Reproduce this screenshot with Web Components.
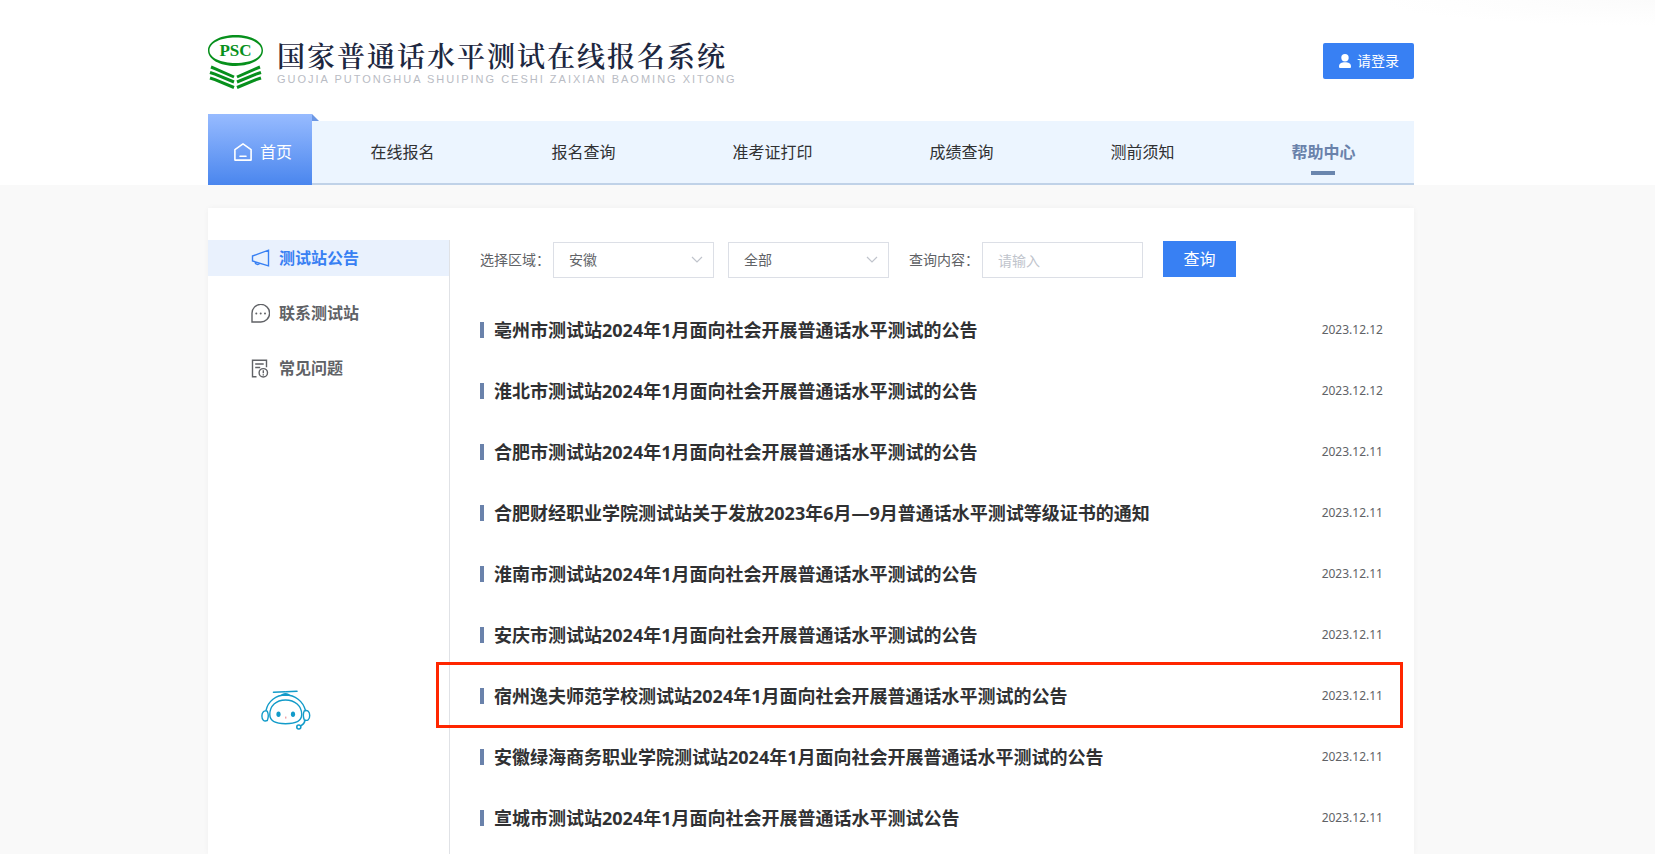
<!DOCTYPE html>
<html lang="zh-CN">
<head>
<meta charset="utf-8">
<meta name="viewport" content="width=device-width, initial-scale=1">
<title>国家普通话水平测试在线报名系统</title>
<style>
  html { height: 100%; }
  body {
    margin: 0; min-height: 100%; display: flex; flex-direction: column;
    background: #f9f9f9; color: #303133;
    font: 14px/20px "Noto Sans", "Noto Sans CJK SC", sans-serif;
    --gutter: 33px; --page: 1206px; --blue: #3880f3; --slate: #6a82ab;
  }
</style>
</head>
<body>
<site-header>
  <site-brand slot="brand"></site-brand>
  <login-button slot="action">请登录</login-button>
  <site-nav slot="nav">
    <nav-home slot="home">首页</nav-home>
    <nav-item>在线报名</nav-item>
    <nav-item>报名查询</nav-item>
    <nav-item>准考证打印</nav-item>
    <nav-item>成绩查询</nav-item>
    <nav-item>测前须知</nav-item>
    <nav-item current>帮助中心</nav-item>
  </site-nav>
</site-header>
<help-panel>
  <side-menu slot="side">
    <side-item icon="horn" current>测试站公告</side-item>
    <side-item icon="chat">联系测试站</side-item>
    <side-item icon="doc">常见问题</side-item>
    <help-robot slot="robot"></help-robot>
  </side-menu>
  <filter-bar></filter-bar>
  <notice-list>
    <notice-row date="2023.12.12">亳州市测试站2024年1月面向社会开展普通话水平测试的公告</notice-row>
    <notice-row date="2023.12.12">淮北市测试站2024年1月面向社会开展普通话水平测试的公告</notice-row>
    <notice-row date="2023.12.11">合肥市测试站2024年1月面向社会开展普通话水平测试的公告</notice-row>
    <notice-row date="2023.12.11">合肥财经职业学院测试站关于发放2023年6月—9月普通话水平测试等级证书的通知</notice-row>
    <notice-row date="2023.12.11">淮南市测试站2024年1月面向社会开展普通话水平测试的公告</notice-row>
    <notice-row date="2023.12.11">安庆市测试站2024年1月面向社会开展普通话水平测试的公告</notice-row>
    <notice-row date="2023.12.11" marked>宿州逸夫师范学校测试站2024年1月面向社会开展普通话水平测试的公告</notice-row>
    <notice-row date="2023.12.11">安徽绿海商务职业学院测试站2024年1月面向社会开展普通话水平测试的公告</notice-row>
    <notice-row date="2023.12.11">宣城市测试站2024年1月面向社会开展普通话水平测试公告</notice-row>
  </notice-list>
</help-panel>

<script>
const define = (name, render) => customElements.define(name, class extends HTMLElement {
  connectedCallback() {
    if (this.shadowRoot) return;
    this.attachShadow({ mode: 'open' }).innerHTML = render(this);
  }
});

define('site-header', () => `
<style>
  :host { display: block; padding-right: var(--gutter);
    background: radial-gradient(ellipse 280px 26px at 100% 0, #fbfbfb, #fff) #fff; }
  header { max-width: var(--page); margin: 0 auto; }
  .top { display: flex; justify-content: space-between; align-items: flex-start; height: 79px; padding-top: 35px; }
  ::slotted([slot=action]) { margin-top: 8px; }
</style>
<header><div class="top"><slot name="brand"></slot><slot name="action"></slot></div><slot name="nav"></slot></header>`);

define('site-brand', () => `
<style>
  :host { display: flex; gap: 14px; }
  svg { flex: none; }
  .psc { font: bold 17px "Liberation Serif", serif; fill: #07901c; }
  h1 { margin: 2px 0 0; font: 600 28px/36px "Noto Serif CJK SC", "Noto Sans CJK SC", serif; letter-spacing: 2px; color: #1d2740; white-space: nowrap; }
  p { margin: 0; font: 11px/12px "Liberation Sans", sans-serif; letter-spacing: 2px; color: #b9bcc4; white-space: nowrap; }
</style>
<svg width="55" height="54" viewBox="0 0 55 54" role="img" aria-label="PSC">
  <path fill="#07901c" fill-rule="evenodd" d="M27.500 0C43 0 55 6.500 55 15.500S43 31 27.500 31 0 24.500 0 15.500 12 0 27.500 0zM27.500 2.600C13 2.600 1.500 8 1.500 15.500S13 28 27.500 28 53.500 23 53.500 15.500 42 2.600 27.500 2.600z"/>
  <text class="psc" x="27.500" y="21" text-anchor="middle">PSC</text>
  <g fill="none" stroke="#07901c" stroke-width="3">
    <path d="M3 32l4.500 1.800L26 42M2 37.500l5 1.700L26 47M2 43l5 1.700L26 52.500"/>
    <path d="M52 32l-4.500 1.800L29 42M53 37.500l-5 1.700L29 47M53 43l-5 1.700L29 52.500"/>
  </g>
</svg>
<div><h1>国家普通话水平测试在线报名系统</h1><p>GUOJIA PUTONGHUA SHUIPING CESHI ZAIXIAN BAOMING XITONG</p></div>`);

define('login-button', () => `
<style>
  :host { display: block; }
  button { display: flex; align-items: center; gap: 6px; height: 36px; padding: 0 15px 0 16px; border: 0; border-radius: 2px;
    background: var(--blue); color: #fff; font: inherit; cursor: pointer; white-space: nowrap; }
</style>
<button type="button"><svg width="12" height="14" viewBox="0 0 12 14" fill="#fff" aria-hidden="true"><circle cx="6" cy="3.700" r="3.700"/><path d="M0 12.500C0 9.600 2.500 8.300 6 8.300s6 1.300 6 4.200c0 1-.5 1.500-1.500 1.500h-9C.5 14 0 13.500 0 12.500z"/></svg><slot></slot></button>`);

define('site-nav', () => `
<style>
  :host { display: block; }
  nav { display: flex; align-items: flex-end; }
  .items { flex: 1; display: flex; justify-content: space-around; height: 62px; background: #ecf5ff; border-bottom: 2px solid #c0d2e8; }
</style>
<nav aria-label="主导航"><slot name="home"></slot><div class="items"><slot></slot></div></nav>`);

define('nav-home', () => `
<style>
  :host { display: block; position: relative; }
  a { display: flex; align-items: center; gap: 8px; width: 104px; height: 71px; box-sizing: border-box; padding: 4px 0 0 26px;
    background: linear-gradient(#97bbff, #4a86ee); color: #fff; font-size: 16px; line-height: 24px; text-decoration: none; }
  :host::after { content: ""; position: absolute; left: 100%; top: 0; width: 7px; height: 7px; background: #6c97e4; clip-path: polygon(0 0, 100% 100%, 0 100%); }
</style>
<a href="#"><svg width="18" height="18" viewBox="0 0 18 18" fill="none" stroke="#fff" stroke-width="1.600" stroke-linejoin="round" stroke-linecap="round" aria-hidden="true"><path d="M.9 6.600L9 .9l8.100 5.700v10.500H.9zM6 13.200h6"/></svg><slot></slot></a>`);

define('nav-item', () => `
<style>
  :host { display: block; }
  a { position: relative; display: block; color: #303133; font-size: 16px; line-height: 62px; text-decoration: none; white-space: nowrap; }
  :host([current]) a { color: var(--slate); font-weight: 700; }
  :host([current]) a::after { content: ""; position: absolute; left: 50%; bottom: 8px; width: 24px; height: 4px; margin-left: -12px; background: #6a86ae; }
</style>
<a href="#"><slot></slot></a>`);

define('help-panel', () => `
<style>
  :host { flex: 1; display: flex; padding: 23px var(--gutter) 0 0; }
  main { flex: 1; display: flex; max-width: var(--page); margin: 0 auto; padding-top: 32px; box-sizing: border-box; background: #fff; box-shadow: 0 0 6px rgba(0,0,0,.04); }
  section { flex: 1; min-width: 0; padding: 1px 31px 0 30px; }
  ::slotted([slot=side]) { flex: none; width: 241px; border-right: 1px solid #e0e2e6; }
</style>
<main><slot name="side"></slot><section><slot></slot></section></main>`);

define('side-menu', () => `
<style>
  :host { display: block; position: relative; }
  nav { display: flex; flex-direction: column; gap: 19px; }
  ::slotted([slot=robot]) { position: absolute; left: 53px; top: 450px; }
</style>
<nav aria-label="帮助中心"><slot></slot></nav><slot name="robot"></slot>`);

const sideIcons = {
  horn: '<path d="M1.500 7L17.500 1.200v15.600L1.500 12zM4 12.800c0 3 4.200 3.500 4.500 1.300"/>',
  chat: '<path d="M1 18V9.500A8.800 8.800 0 1 1 9.500 18z"/><g fill="currentColor" stroke="none"><circle cx="5.300" cy="9.500" r="1"/><circle cx="9.700" cy="9.500" r="1"/><circle cx="14" cy="9.500" r="1"/></g>',
  doc: '<path d="M5.500 17.800H1.500V1.200h14v7M4.200 5h8.500M4.200 8.500h5"/><circle cx="12.300" cy="13.800" r="4.200"/><path d="M12.300 11.300v3M12.300 15.300v1.200"/>'
};
define('side-item', el => `
<style>
  :host { display: block; }
  a { display: flex; align-items: center; gap: 9px; height: 36px; padding-left: 43px; color: #606266; font-size: 16px; font-weight: 700; line-height: 24px; text-decoration: none; }
  :host([current]) a { background: #e9f1fd; color: var(--blue); }
</style>
<a href="#"><svg width="19" height="19" viewBox="0 0 19 19" fill="none" stroke="currentColor" stroke-width="1.400" aria-hidden="true">${sideIcons[el.getAttribute('icon')]}</svg><slot></slot></a>`);

define('help-robot', () => `
<style>:host, svg { display: block; }</style>
<svg width="50" height="40" viewBox="0 0 50 40" fill="none" stroke="#129bc9" stroke-width="1.400" stroke-linecap="round" role="img" aria-label="在线客服">
  <path d="M12.500 2.300L24 1.800M25 1.800L36 1.300" stroke-width="1.600"/>
  <path d="M20.500 5.200c2-2 6-2 8 0z" fill="#129bc9"/>
  <path d="M5 20.500C7 11 15 5 24.500 5S42 11 44.500 20.500"/>
  <path d="M24.500 10C15 10 8.800 16 8.800 24.500c0 7 6.200 9.200 15.700 9.200s16.200-2.200 16.200-9.200C40.700 16 34 10 24.500 10z"/>
  <path d="M6.300 21.200C3 20 .9 22 .9 26s2 5.800 5.400 4.500c1-2.500 1-7 0-9.300zM43.300 20.800c3.300-1.200 5.400.8 5.400 4.700s-2 5.800-5.400 4.500c-1-2.500-1-7 0-9.200z"/>
  <path d="M44 30.500c-.5 2.500-2 4.300-4.300 5.300"/><circle cx="37.800" cy="37" r="2" stroke-width="1.600"/>
  <g fill="#129bc9" stroke="none"><ellipse cx="17.500" cy="24.300" rx="2.100" ry="2.700"/><ellipse cx="32" cy="24.300" rx="2.100" ry="2.700"/></g>
  <path d="M24.800 27v1.200" stroke="#e87a80" stroke-width="1"/>
</svg>`);

define('filter-bar', () => `
<style>
  :host { display: block; }
  form { display: flex; align-items: center; height: 38px; color: #606266; }
  label { width: 73px; white-space: nowrap; }
  .pick { position: relative; width: 161px; margin-right: 14px; }
  .pick.last { margin-right: 20px; }
  .pick svg { position: absolute; right: 11px; top: 14px; pointer-events: none; }
  select, input { display: block; box-sizing: border-box; width: 161px; height: 36px; margin: 0; padding: 0 15px; border: 1px solid #dcdfe6; border-radius: 0;
    background: #fff; color: #606266; font: inherit; appearance: none; outline: 0; }
  input::placeholder { color: #c0c4cc; opacity: 1; }
  button { width: 73px; height: 36px; margin: 0 0 2px 20px; padding: 0; border: 0; background: var(--blue); color: #fff; font: inherit; font-size: 16px; cursor: pointer; }
</style>
<form onsubmit="return false">
  <label for="area">选择区域：</label>
  <div class="pick"><select id="area"><option>安徽</option></select><svg width="12" height="8" viewBox="0 0 12 8" fill="none" stroke="#c0c4cc" stroke-width="1.200" aria-hidden="true"><path d="M1 1l5 5 5-5"/></svg></div>
  <div class="pick last"><select aria-label="测试站"><option>全部</option></select><svg width="12" height="8" viewBox="0 0 12 8" fill="none" stroke="#c0c4cc" stroke-width="1.200" aria-hidden="true"><path d="M1 1l5 5 5-5"/></svg></div>
  <label for="words">查询内容：</label>
  <input id="words" type="text" placeholder="请输入">
  <button type="submit">查询</button>
</form>`);

define('notice-list', () => `
<style>:host { display: block; padding-top: 20px; }</style>
<div role="list"><slot></slot></div>`);

define('notice-row', el => `
<style>
  :host { display: block; position: relative; }
  article { display: flex; align-items: center; height: 61px; }
  article::before { content: ""; flex: none; width: 4px; height: 16px; margin-right: 10px; background: var(--slate); }
  a { flex: 1; color: #303133; font-size: 18px; font-weight: 700; line-height: 28px; text-decoration: none; }
  time { color: #606266; font-size: 12px; line-height: 20px; }
  :host([marked])::after { content: ""; position: absolute; inset: -3px -20px -2px -44px; border: 3px solid #ff2600; pointer-events: none; }
</style>
<article role="listitem"><a href="#"><slot></slot></a><time>${el.getAttribute('date')}</time></article>`);
</script>
</body>
</html>
